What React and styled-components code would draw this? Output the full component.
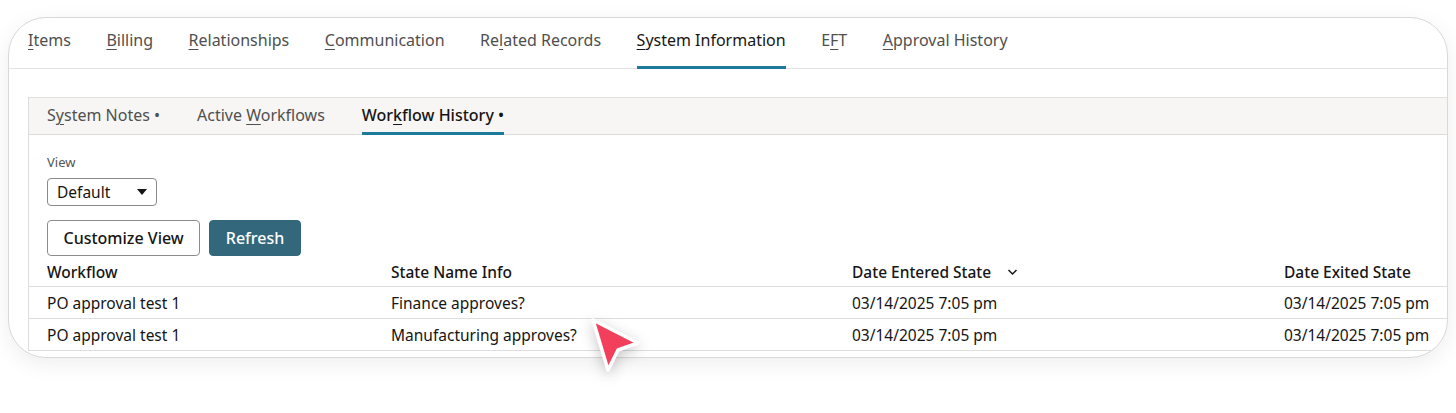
import styled, { createGlobalStyle } from "styled-components";

const Global = createGlobalStyle`
  body {
    margin: 0;
    background: #ffffff;
    font-family: "Noto Sans", "Liberation Sans", sans-serif;
  }
  u {
    text-decoration-thickness: 1px;
    text-underline-offset: 3px;
  }
`;

const Page = styled.div`
  position: relative;
  width: 1456px;
  height: 413px;
  padding: 17px 8px 0 8px;
  box-sizing: border-box;
`;

const Card = styled.div`
  height: 341px;
  background: #fff;
  border: 1px solid #d9d9d9;
  border-radius: 38px;
  box-shadow: 0 6px 22px rgba(0, 0, 0, 0.07);
  overflow: hidden;
  box-sizing: border-box;
`;

const TopTabs = styled.div`
  display: flex;
  gap: 35.5px;
  height: 51px;
  padding-left: 19px;
  border-bottom: 1px solid #e3e3e3;
  box-sizing: border-box;
`;

const TopTab = styled.div`
  padding-top: 11px;
  font-size: 16px;
  line-height: 22px;
  white-space: nowrap;
  color: ${(p) => (p.$active ? "#161513" : "#4f4f4f")};
  border-bottom: 3px solid ${(p) => (p.$active ? "#1e7a9a" : "transparent")};
  margin-bottom: -1px;
  box-sizing: border-box;
`;

const Body = styled.div`
  padding: 28px 0 0 19px;
`;

const Panel = styled.div`
  border-left: 1px solid #dcdcdc;
  margin-right: -40px;
`;

const SubTabs = styled.div`
  display: flex;
  gap: 37px;
  height: 38px;
  padding-left: 18px;
  background: #f7f6f4;
  border-top: 1px solid #e1e1e1;
  border-bottom: 1px solid #dcdcdc;
  box-sizing: border-box;
`;

const SubTab = styled.div`
  padding-top: 7px;
  font-size: 16px;
  line-height: 21px;
  white-space: nowrap;
  color: ${(p) => (p.$active ? "#161513" : "#505050")};
  font-weight: ${(p) => (p.$active ? 500 : 400)};
  border-bottom: 3px solid ${(p) => (p.$active ? "#1e7a9a" : "transparent")};
  margin-bottom: -1px;
  box-sizing: border-box;
`;

const Content = styled.div`
  padding: 19px 0 0 18px;
`;

const Label = styled.div`
  font-size: 13px;
  line-height: 17px;
  color: #555;
`;

const Select = styled.div`
  display: flex;
  align-items: center;
  justify-content: space-between;
  margin-top: 7px;
  width: 110px;
  height: 28px;
  padding: 0 9px 0 9px;
  border: 1px solid #8a8a8a;
  border-radius: 4px;
  font-size: 15.5px;
  color: #161513;
  box-sizing: border-box;
`;

const Caret = styled.span`
  width: 0;
  height: 0;
  border-left: 5px solid transparent;
  border-right: 5px solid transparent;
  border-top: 6px solid #161513;
`;

const Buttons = styled.div`
  display: flex;
  gap: 9px;
  margin-top: 14px;
`;

const Button = styled.button`
  height: 36px;
  padding: 0 15.5px;
  border-radius: 4px;
  border: 1px solid ${(p) => (p.$primary ? "#33677c" : "#8c8c8c")};
  background: ${(p) => (p.$primary ? "#33677c" : "#fff")};
  color: ${(p) => (p.$primary ? "#fff" : "#161513")};
  font-family: inherit;
  font-size: 16px;
  font-weight: 500;
`;

const Table = styled.div`
  margin-top: 5px;
  margin-left: -18px;
`;

const Row = styled.div`
  display: grid;
  grid-template-columns: 344px 461px 432px 1fr;
  align-items: center;
  height: 32px;
  padding-left: 18px;
  border-bottom: 1px solid #dedede;
  box-sizing: border-box;
  font-size: 15.5px;
  color: #161513;
  font-weight: ${(p) => (p.$head ? 500 : 400)};
  ${(p) => p.$head && "height: 26px; align-items: start;"}
`;

const HeadCell = styled.div`
  display: flex;
  align-items: center;
  gap: 16px;
`;

const Pointer = styled.svg`
  position: absolute;
  left: 584px;
  top: 311px;
  filter: drop-shadow(0 4px 7px rgba(0, 0, 0, 0.22));
`;

const rows = [
  ["PO approval test 1", "Finance approves?"],
  ["PO approval test 1", "Manufacturing approves?"],
];

export default function App() {
  return (
    <Page>
      <Global />
      <Card>
        <TopTabs>
          <TopTab><u>I</u>tems</TopTab>
          <TopTab><u>B</u>illing</TopTab>
          <TopTab><u>R</u>elationships</TopTab>
          <TopTab><u>C</u>ommunication</TopTab>
          <TopTab>Re<u>l</u>ated Records</TopTab>
          <TopTab $active><u>S</u>ystem Information</TopTab>
          <TopTab>E<u>F</u>T</TopTab>
          <TopTab><u>A</u>pproval History</TopTab>
        </TopTabs>
        <Body>
          <Panel>
            <SubTabs>
              <SubTab>S<u>y</u>stem Notes •</SubTab>
              <SubTab>Active <u>W</u>orkflows</SubTab>
              <SubTab $active>Wor<u>k</u>flow History •</SubTab>
            </SubTabs>
            <Content>
              <Label>View</Label>
              <Select>
                Default
                <Caret />
              </Select>
              <Buttons>
                <Button>Customize View</Button>
                <Button $primary>Refresh</Button>
              </Buttons>
              <Table>
                <Row $head>
                  <div>Workflow</div>
                  <div>State Name Info</div>
                  <HeadCell>
                    Date Entered State
                    <svg width="11" height="8" viewBox="0 0 11 8">
                      <path d="M1.5 2 L5.5 6 L9.5 2" fill="none" stroke="#161513" strokeWidth="1.5" />
                    </svg>
                  </HeadCell>
                  <div>Date Exited State</div>
                </Row>
                {rows.map((r, i) => (
                  <Row key={i}>
                    <div>{r[0]}</div>
                    <div>{r[1]}</div>
                    <div>03/14/2025 7:05 pm</div>
                    <div>03/14/2025 7:05 pm</div>
                  </Row>
                ))}
              </Table>
            </Content>
          </Panel>
        </Body>
      </Card>
      <Pointer width="64" height="66" viewBox="0 0 64 66">
        <path
          d="M9 9 L54 32 L34 39 L24 59 Z"
          fill="#f2405c"
          stroke="#fff"
          strokeWidth="3.5"
          strokeLinejoin="round"
        />
      </Pointer>
    </Page>
  );
}
